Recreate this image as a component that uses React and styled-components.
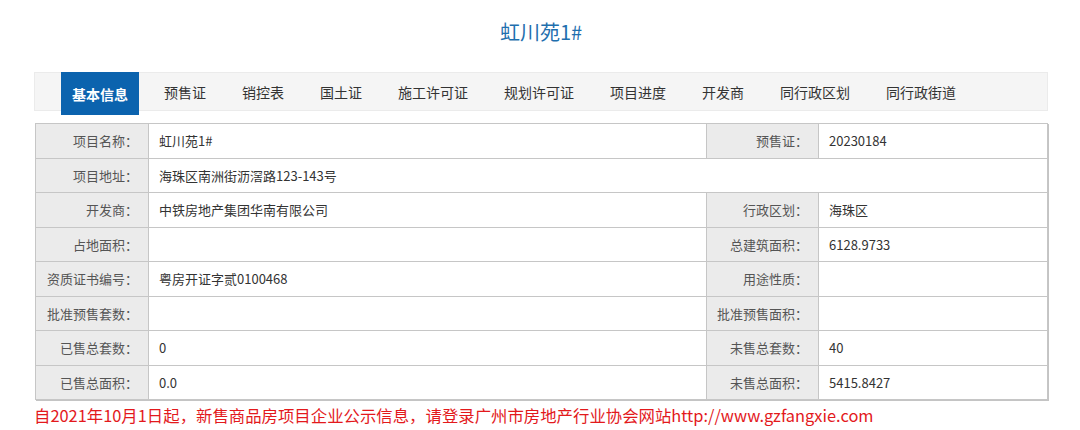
import React from 'react';
import styled, { createGlobalStyle } from 'styled-components';

const GlobalStyle = createGlobalStyle`
  body {
    margin: 0;
    background: #fff;
    font-family: "Noto Sans CJK SC", "Noto Sans", sans-serif;
  }
`;

const Page = styled.div`
  width: 1014px;
  margin-left: 34px;
`;

const Title = styled.h1`
  margin: 0;
  padding-top: 18px;
  height: 72px;
  box-sizing: border-box;
  text-align: center;
  font-size: 20px;
  line-height: 28px;
  font-weight: normal;
  color: #1f6fae;
`;

const TabBar = styled.div`
  display: flex;
  gap: 14px;
  height: 39px;
  padding-left: 26px;
  background: #f5f5f5;
  border: 1px solid #ebebeb;
  box-sizing: border-box;
`;

const Tab = styled.div`
  display: flex;
  align-items: center;
  padding: 0 11px;
  font-size: 14px;
  color: ${p => (p.active ? '#fff' : '#333')};
  background: ${p => (p.active ? '#0b63ae' : 'transparent')};
  font-weight: ${p => (p.active ? 'bold' : 'normal')};
  height: ${p => (p.active ? '43px' : 'auto')};
  margin-top: ${p => (p.active ? '-1px' : '0')};
  white-space: nowrap;
`;

const Table = styled.table`
  margin-top: 12px;
  margin-left: 1px;
  width: 1013px;
  border-collapse: collapse;
  table-layout: fixed;
  border: 1px solid #a8a8a8;
  box-shadow: 1px 1px 0 #c4c4c4;
  font-size: 13px;
`;

const Label = styled.td`
  height: 33.5px;
  padding: 0 10px;
  background: #ebebeb;
  border: 1px solid #c6c6c6;
  text-align: right;
  color: #555;
  white-space: nowrap;
`;

const Value = styled.td`
  height: 33.5px;
  padding: 0 10px;
  background: #fff;
  border: 1px solid #c6c6c6;
  color: #333;
  white-space: nowrap;
`;

const Notice = styled.p`
  margin: 4px 0 0 0;
  font-size: 16.4px;
  line-height: 22px;
  color: #e3191c;
  white-space: nowrap;
`;

const tabs = ['基本信息', '预售证', '销控表', '国土证', '施工许可证', '规划许可证', '项目进度', '开发商', '同行政区划', '同行政街道'];

const rows = [
  ['项目名称：', '虹川苑1#', '预售证：', '20230184'],
  ['项目地址：', '海珠区南洲街沥滘路123-143号'],
  ['开发商：', '中铁房地产集团华南有限公司', '行政区划：', '海珠区'],
  ['占地面积：', '', '总建筑面积：', '6128.9733'],
  ['资质证书编号：', '粤房开证字贰0100468', '用途性质：', ''],
  ['批准预售套数：', '', '批准预售面积：', ''],
  ['已售总套数：', '0', '未售总套数：', '40'],
  ['已售总面积：', '0.0', '未售总面积：', '5415.8427'],
];

export default function App() {
  return (
    <>
      <GlobalStyle />
      <Page>
        <Title>虹川苑1#</Title>
        <TabBar>
          {tabs.map((t, i) => (
            <Tab key={t} active={i === 0}>{t}</Tab>
          ))}
        </TabBar>
        <Table>
          <colgroup>
            <col style={{ width: 113 }} />
            <col style={{ width: 558 }} />
            <col style={{ width: 112 }} />
            <col />
          </colgroup>
          <tbody>
            {rows.map((r, i) => (
              <tr key={i}>
                <Label>{r[0]}</Label>
                {r.length === 2 ? (
                  <Value colSpan={3}>{r[1]}</Value>
                ) : (
                  <>
                    <Value>{r[1]}</Value>
                    <Label>{r[2]}</Label>
                    <Value>{r[3]}</Value>
                  </>
                )}
              </tr>
            ))}
          </tbody>
        </Table>
        <Notice>自2021年10月1日起，新售商品房项目企业公示信息，请登录广州市房地产行业协会网站http://www.gzfangxie.com</Notice>
      </Page>
    </>
  );
}
